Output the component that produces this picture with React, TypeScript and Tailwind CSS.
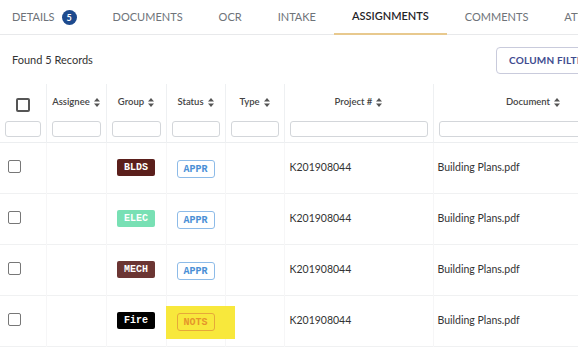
import React from "react";

const tabs = ["DETAILS", "DOCUMENTS", "OCR", "INTAKE", "ASSIGNMENTS", "COMMENTS", "ATTACHMENTS"];

const columns = [
  { label: "Assignee", w: "w-[60px]" },
  { label: "Group", w: "w-[60px]" },
  { label: "Status", w: "w-[59px]" },
  { label: "Type", w: "w-[59px]" },
  { label: "Project #", w: "w-[149px]" },
  { label: "Document", w: "w-[200px]" },
];

const rows = [
  { group: "BLDS", groupCls: "bg-[#5b1f1c] text-white", status: "APPR" },
  { group: "ELEC", groupCls: "bg-[#78e0b4] text-white", status: "APPR" },
  { group: "MECH", groupCls: "bg-[#6b3533] text-white", status: "APPR" },
  { group: "Fire", groupCls: "bg-black text-white", status: "NOTS" },
];

function SortIcon() {
  return (
    <svg width="6" height="9" viewBox="0 0 6 9" className="inline-block ml-[4px] -mt-[1px]">
      <path d="M3 0 L6 3.6 H0 Z" fill="#555" />
      <path d="M3 9 L6 5.4 H0 Z" fill="#555" />
    </svg>
  );
}

function StatusBadge({ status }: { status: string }) {
  if (status === "NOTS") {
    return (
      <span className="relative inline-block align-middle">
        <span className="absolute -left-[11px] -right-[20px] -top-[7px] -bottom-[8px] bg-[#f8e83c]" />
        <span className="relative flex items-center justify-center w-[38px] h-[18px] rounded-[3px] border border-[#e6a93a] text-[#e5952b] text-[10px] font-bold font-['Liberation_Mono',monospace]">
          NOTS
        </span>
      </span>
    );
  }
  return (
    <span className="inline-flex align-middle items-center justify-center w-[38px] h-[18px] rounded-[3px] border border-[#8dbbe8] text-[#4a8fd6] text-[10px] font-bold font-['Liberation_Mono',monospace]">
      {status}
    </span>
  );
}

export default function App() {
  return (
    <div className="w-[578px] h-[349px] overflow-hidden bg-white font-['Lato','Liberation_Sans',sans-serif] text-[#333]">
      {/* Tabs */}
      <div className="flex h-[35px] border-b border-[#e8e9eb] whitespace-nowrap">
        {tabs.map((t, i) => (
          <div
            key={t}
            className={`flex items-center h-[35px] text-[11px] ${i === 0 ? "pl-3 pr-[18px]" : "px-[18px]"} ${
              t === "ASSIGNMENTS"
                ? "text-[#1f2328] font-semibold border-b-2 border-[#e8c98e]"
                : "text-[#6e7379]"
            }`}
          >
            {t}
            {t === "DETAILS" && (
              <span className="ml-[7px] inline-flex items-center justify-center w-[15px] h-[15px] rounded-full bg-[#1d4a8e] text-white text-[9px] font-bold">
                5
              </span>
            )}
          </div>
        ))}
      </div>

      {/* Toolbar */}
      <div className="flex items-center justify-between pl-3 pt-[12px] pb-[10px]">
        <span className="text-[11px] text-[#333]">Found 5 Records</span>
        <button className="h-[27px] w-[100px] shrink-0 translate-x-[18px] rounded-[4px] border border-[#c9cbdc] text-[10px] font-bold tracking-[0.2px] text-[#404b8f] text-left pl-[12px] whitespace-nowrap">
          COLUMN FILTER
        </button>
      </div>

      {/* Table */}
      <table className="table-fixed border-collapse w-[633px]">
        <thead>
          <tr className="h-[34px]">
            <th className="w-[46px] align-top border-r border-[#eef0f2]">
              <span className="mt-[14px] mx-auto block w-[14px] h-[14px] rounded-[2px] border-2 border-[#555]" />
            </th>
            {columns.map((c) => (
              <th
                key={c.label}
                className={`${c.w} align-top pt-[11px] text-[9.5px] font-semibold text-[#444] border-r border-[#eef0f2] whitespace-nowrap`}
              >
                {c.label}
                <SortIcon />
              </th>
            ))}
          </tr>
          <tr className="h-[24px] border-b border-[#eceef0]">
            <th className="align-top pt-[3px] px-[5px] border-r border-[#eef0f2]">
              <div className="h-[16px] rounded-[3px] border border-[#d3d6da]" />
            </th>
            {columns.map((c) => (
              <th key={c.label} className="align-top pt-[3px] px-[5px] border-r border-[#eef0f2]">
                <div className="h-[16px] rounded-[3px] border border-[#d3d6da]" />
              </th>
            ))}
          </tr>
        </thead>
        <tbody>
          {rows.map((r, i) => (
            <tr key={i} className="h-[51px] border-b border-[#f0f1f2]">
              <td className="pl-[8px] align-middle border-r border-[#f6f6f7]">
                <span className="block w-[13px] h-[13px] -mt-[3px] rounded-[2px] border-[1.5px] border-[#777]" />
              </td>
              <td className="border-r border-[#f6f6f7]" />
              <td className="text-center align-middle border-r border-[#f6f6f7]">
                <span
                  className={`inline-flex align-middle -mt-[3px] items-center justify-center w-[38px] h-[17px] rounded-[2px] text-[10px] font-bold font-['Liberation_Mono',monospace] ${r.groupCls}`}
                >
                  {r.group}
                </span>
              </td>
              <td className="text-center align-middle border-r border-[#f6f6f7]">
                <StatusBadge status={r.status} />
              </td>
              <td className="border-r border-[#f6f6f7]" />
              <td className="pl-[5px] text-[10.5px] border-r border-[#f6f6f7]">K201908044</td>
              <td className="pl-[4px] text-[10.5px]">Building Plans.pdf</td>
            </tr>
          ))}
        </tbody>
      </table>
    </div>
  );
}
